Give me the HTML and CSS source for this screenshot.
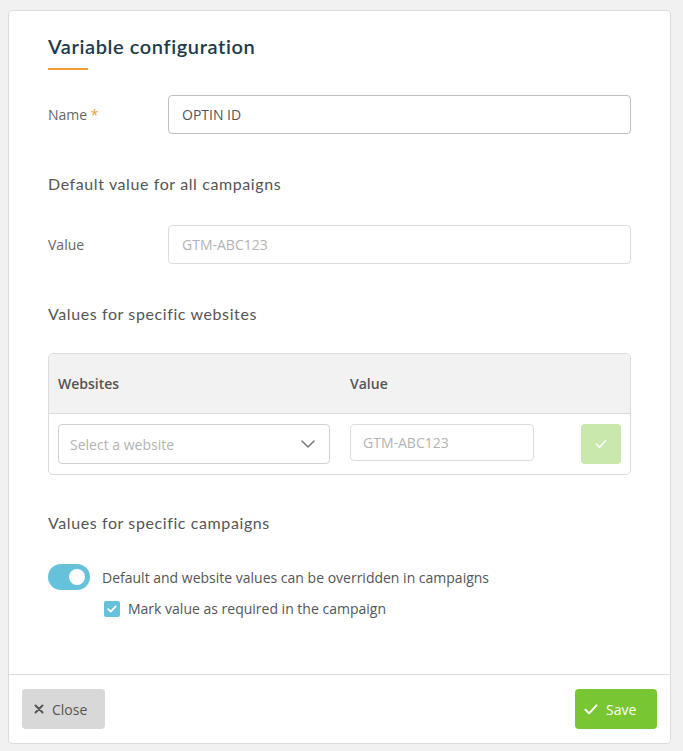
FILE: index.html
```html
<!DOCTYPE html>
<html lang="en">

  <head>
    <meta charset="UTF-8">
    <meta name="viewport" content="width=device-width, initial-scale=1.0">
    <title>Variable configuration</title>
    <link rel="stylesheet" href="styles.css">
  </head>

  <body>
    <div class="modal">
      <div class="modal-body">
        <h2 class="modal-title">Variable configuration</h2>
        <div class="title-line"></div>

        <div class="form-row name-row">
          <label class="form-label">Name <span class="required">*</span></label>
          <input class="form-input" type="text" value="OPTIN ID">
        </div>

        <h3 class="section-title">Default value for all campaigns</h3>
        <div class="form-row">
          <label class="form-label">Value</label>
          <input class="form-input" type="text" placeholder="GTM-ABC123">
        </div>

        <h3 class="section-title">Values for specific websites</h3>
        <div class="site-table">
          <div class="site-table-head">
            <span>Websites</span>
            <span>Value</span>
          </div>
          <div class="site-table-row">
            <div class="select-box">
              <span>Select a website</span>
              <svg width="14" height="8" viewBox="0 0 14 8">
                <path d="M1 1l6 6 6-6" fill="none" stroke="#777" stroke-width="1.5" stroke-linecap="round" stroke-linejoin="round"/>
              </svg>
            </div>
            <input class="form-input small-input" type="text" placeholder="GTM-ABC123">
            <button class="add-btn">
              <svg width="12" height="10" viewBox="0 0 12 10">
                <path d="M1.5 5.2l3 3 6-6.5" fill="none" stroke="#fff" stroke-width="1.6" stroke-linecap="round" stroke-linejoin="round"/>
              </svg>
            </button>
          </div>
        </div>

        <h3 class="section-title">Values for specific campaigns</h3>
        <div class="toggle-row">
          <span class="toggle"><span class="toggle-knob"></span></span>
          <span class="option-text">Default and website values can be overridden in campaigns</span>
        </div>
        <div class="check-row">
          <span class="checkbox">
            <svg width="10" height="8" viewBox="0 0 10 8">
              <path d="M1.2 4.2l2.5 2.4 5-5.2" fill="none" stroke="#fff" stroke-width="1.7" stroke-linecap="round" stroke-linejoin="round"/>
            </svg>
          </span>
          <span class="option-text">Mark value as required in the campaign</span>
        </div>
      </div>

      <div class="modal-footer">
        <button class="btn btn-close">
          <svg width="10" height="10" viewBox="0 0 10 10">
            <path d="M1.5 1.5l7 7M8.5 1.5l-7 7" stroke="#555" stroke-width="2" stroke-linecap="round"/>
          </svg>
          Close
        </button>
        <button class="btn btn-save">
          <svg width="14" height="11" viewBox="0 0 14 11">
            <path d="M1.5 5.8l3.6 3.6 7.4-8" fill="none" stroke="#fff" stroke-width="2" stroke-linecap="round" stroke-linejoin="round"/>
          </svg>
          Save
        </button>
      </div>
    </div>
  </body>

</html>
```

FILE: styles.css
```css
body {
  margin: 0;
  padding: 10px 12px 0 8px;
  background-color: #f1f1f1;
  font-family: 'Open Sans', sans-serif;
  font-size: 14px;
  color: #555;
}

.modal {
  background-color: #fff;
  border: 1px solid #dcdcdc;
  border-radius: 4px;
}

.modal-body {
  padding: 21px 39px 56px 39px;
}

.modal-title {
  margin: 0;
  font-family: 'Lato', sans-serif;
  font-size: 20px;
  font-weight: 600;
  line-height: 28px;
  letter-spacing: 0.6px;
  color: #1d3b4c;
}

.title-line {
  width: 40px;
  height: 2px;
  margin-top: 8px;
  background-color: #f19d32;
}

.form-row {
  display: flex;
  align-items: center;
}

.name-row {
  margin-top: 25px;
}

.form-label {
  width: 120px;
  flex-shrink: 0;
  color: #666;
}

.required {
  color: #f19d32;
}

.form-input {
  flex: 1;
  height: 39px;
  box-sizing: border-box;
  padding: 0 13px;
  border: 1px solid #bfbfbf;
  border-radius: 4px;
  font-family: 'Open Sans', sans-serif;
  font-size: 14px;
  color: #555;
  outline: none;
}

.form-input::placeholder {
  color: #b3b3b3;
}

.form-row .form-input[placeholder] {
  border-color: #dcdcdc;
}

.section-title {
  margin: 39px 0 30px 0;
  font-family: 'Lato', sans-serif;
  font-size: 16px;
  font-weight: 400;
  line-height: 22px;
  letter-spacing: 0.6px;
  color: #555;
}

/* websites table */
.site-table {
  border: 1px solid #dcdcdc;
  border-radius: 5px;
  margin-top: -2px;
}

.site-table-head {
  display: grid;
  grid-template-columns: 272px 184px;
  column-gap: 20px;
  height: 59px;
  align-items: center;
  padding: 0 10px 0 9px;
  background-color: #f2f2f2;
  border-bottom: 1px solid #dcdcdc;
  border-radius: 5px 5px 0 0;
  font-weight: 600;
}

.site-table-row {
  display: grid;
  grid-template-columns: 272px 184px 1fr;
  column-gap: 20px;
  align-items: start;
  padding: 10px 9px 10px 9px;
}

.select-box {
  height: 40px;
  box-sizing: border-box;
  display: flex;
  align-items: center;
  justify-content: space-between;
  padding: 0 14px 0 11px;
  border: 1px solid #d0d0d0;
  border-radius: 4px;
  color: #b3b3b3;
}

.small-input {
  height: 37px;
  padding: 0 12px;
  border-color: #dcdcdc;
}

.add-btn {
  justify-self: end;
  width: 40px;
  height: 40px;
  border: none;
  border-radius: 4px;
  background-color: #c9e8ac;
  display: flex;
  align-items: center;
  justify-content: center;
  cursor: pointer;
}

.site-table + .section-title {
  margin-top: 37px;
}

/* campaign options */
.toggle-row {
  display: flex;
  align-items: center;
  gap: 12px;
}

.toggle {
  width: 42px;
  height: 26px;
  border-radius: 13px;
  background-color: #65c2da;
  display: flex;
  align-items: center;
  justify-content: flex-end;
  padding-right: 5px;
  box-sizing: border-box;
}

.toggle-knob {
  width: 16px;
  height: 16px;
  border-radius: 50%;
  background-color: #fff;
}

.check-row {
  display: flex;
  align-items: center;
  gap: 8px;
  margin-top: 9px;
  padding-left: 56px;
}

.checkbox {
  width: 16px;
  height: 16px;
  border-radius: 2px;
  background-color: #65c2da;
  display: flex;
  align-items: center;
  justify-content: center;
}

/* footer */
.modal-footer {
  display: flex;
  justify-content: space-between;
  padding: 14px 13px 14px 13px;
  border-top: 1px solid #dcdcdc;
}

.btn {
  height: 40px;
  border: none;
  border-radius: 4px;
  display: flex;
  align-items: center;
  gap: 8px;
  font-family: 'Open Sans', sans-serif;
  font-size: 14px;
  cursor: pointer;
}

.btn-close {
  width: 83px;
  padding-left: 12px;
  background-color: #d8d8d8;
  color: #555;
}

.btn-save {
  width: 82px;
  padding-left: 9px;
  background-color: #78c631;
  color: #fff;
}
```
